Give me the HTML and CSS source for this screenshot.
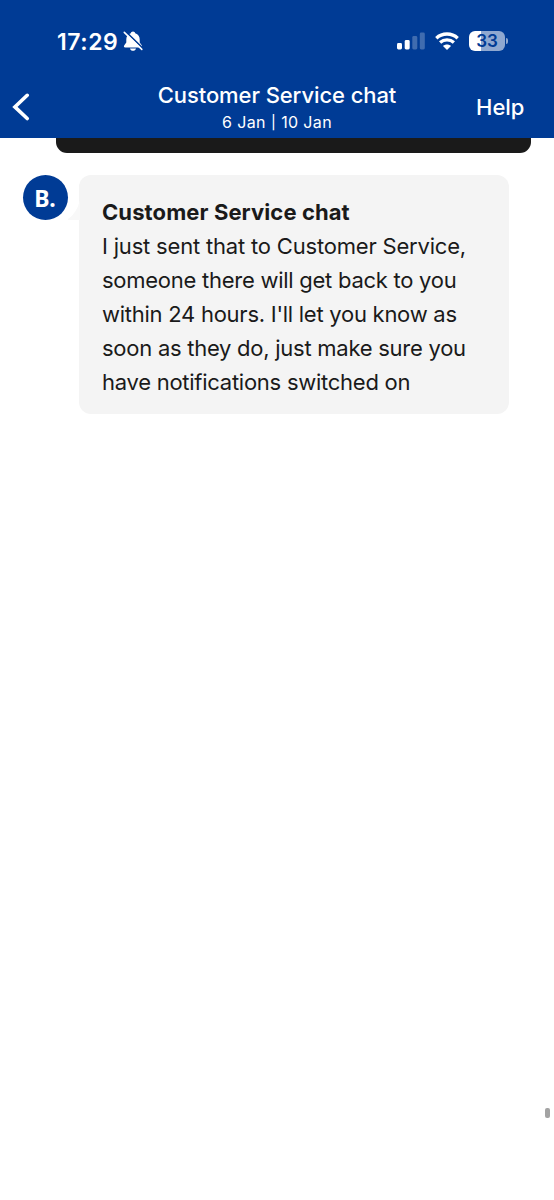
FILE: index.html
```html
<!DOCTYPE html>
<html lang="en">
<head>
<meta charset="utf-8">
<title>Customer Service chat</title>
<link rel="stylesheet" href="styles.css">
</head>
<body>
<header class="header">
  <div class="status">
    <span class="time">17:29</span>
    <svg class="bell" width="20" height="22" viewBox="0 0 20 22">
      <path d="M10 1.5C8.8 1.5 8 2.3 7.8 3.2C4.6 4.1 3.3 6.6 3.3 9.5V12.5L1.3 15.2C.5 16.5 1 17.5 2.3 17.5H17.7C19 17.5 19.5 16.5 18.7 15.2L16.7 12.5V9.5C16.7 6.6 15.4 4.1 12.2 3.2C12 2.3 11.2 1.5 10 1.5ZM7 18.5H13C12.7 20 11.4 20.8 10 20.8S7.3 20 7 18.5Z" fill="#fff"/>
      <path d="M2.2 1.2L20 18.4" stroke="#003b95" stroke-width="1.8"/>
      <path d="M1.3 2.4L18.8 19.4" stroke="#fff" stroke-width="1.6" stroke-linecap="round"/>
    </svg>
    <div class="indicators">
      <svg width="28" height="18" viewBox="0 0 28 18" fill="#fff">
        <rect x="0" y="11" width="5" height="6.5" rx="1.4"/>
        <rect x="7.7" y="8" width="5" height="9.5" rx="1.4"/>
        <rect x="15.3" y="4" width="5" height="13.5" rx="1.4" opacity=".25"/>
        <rect x="22.8" y="0.5" width="5" height="17" rx="1.4" opacity=".25"/>
      </svg>
      <svg class="wifi" width="24" height="18" viewBox="0 0 24 18" fill="none" stroke="#fff" stroke-width="3.3">
        <path d="M1.3 6.2C7.2 .6 16.8 .6 22.7 6.2"/>
        <path d="M5.1 10.5C9 7 15 7 18.9 10.5"/>
        <path d="M12 18L8 14C10.2 12 13.8 12 16 14Z" fill="#fff" stroke="none"/>
      </svg>
      <div class="battery"><span class="level">33</span><span class="cap"></span></div>
    </div>
  </div>
  <nav class="nav">
    <svg class="back" width="18" height="28" viewBox="0 0 18 28"><path d="M15.2 2.3L2.9 13.9L15.2 25.5" fill="none" stroke="#fff" stroke-width="3.6" stroke-linecap="round" stroke-linejoin="miter"/></svg>
    <div class="titles">
      <h1 class="title">Customer Service chat</h1>
      <p class="dates">6 Jan <span class="divider">|</span> 10 Jan</p>
    </div>
    <span class="help">Help</span>
  </nav>
</header>
<main class="chat">
  <div class="previous"></div>
  <article class="message">
    <div class="avatar">B.</div>
    <div class="bubble">
      <svg class="tail" width="12" height="20" viewBox="0 0 12 20"><path d="M12 0Q9 13 0 19V20H12Z" fill="#f8f8f8"/></svg>
      <h2 class="sender">Customer Service chat</h2>
      <p class="text">
        <span class="line l1">I just sent that to Customer Service,</span>
        <span class="line">someone there will get back to you</span>
        <span class="line">within 24 hours. I'll let you know as</span>
        <span class="line">soon as they do, just make sure you</span>
        <span class="line">have notifications switched on</span>
      </p>
    </div>
  </article>
  <div class="scrollbar"></div>
</main>
</body>
</html>
```
FILE: styles.css
```css
* { box-sizing: border-box; margin: 0; }
body { height: 1200px; background: #fff; font-family: Inter, "Liberation Sans", sans-serif; display: flex; flex-direction: column; overflow: hidden; }
.header { height: 138px; background: #003b95; color: #fff; flex: none; }
.status { height: 78px; padding: 4px 46px 0 57px; display: flex; align-items: center; }
.time { font-size: 23px; font-weight: 600; line-height: 30px; letter-spacing: .55px; width: 66px; padding-top: 1px; white-space: nowrap; }
.bell { display: block; }
.indicators { margin-left: auto; display: flex; align-items: center; }
.wifi { margin-left: 10px; }
.battery { position: relative; width: 36px; height: 20px; margin-left: 10px; margin-right: 3px; border-radius: 6px; background: linear-gradient(90deg, #fff 33%, #8fa8d0 33%); display: flex; justify-content: center; align-items: center; }
.level { color: #003b95; font-size: 17px; line-height: 20px; font-weight: 600; }
.cap { position: absolute; left: 37px; top: 7px; width: 2px; height: 6px; border-radius: 0 2px 2px 0; background: #8fa8d0; }
.nav { height: 60px; display: grid; grid-template-columns: 78px 1fr 78px; }
.back { margin: 15px 0 0 12px; }
.titles { text-align: center; }
.title { font-size: 22px; font-weight: 500; line-height: 30px; letter-spacing: -.08px; margin-top: 2px; }
.dates { font-size: 16px; line-height: 22px; letter-spacing: .35px; margin-top: 1px; }
.divider { display: inline-block; transform: scaleY(.85); }
.help { font-size: 22px; line-height: 30px; margin-top: 14px; font-weight: 500; }
.chat { flex: 1; display: flex; flex-direction: column; }
.previous { height: 15px; margin: 0 23px 0 56px; background: #1a1a1a; border-radius: 0 0 11px 11px; }
.message { display: flex; align-items: flex-start; margin: 22px 45px 0 22.5px; gap: 11.5px; }
.avatar { width: 45px; height: 45px; border-radius: 50%; background: #003b95; color: #fff; font-family: "Noto Sans", sans-serif; font-weight: 700; font-size: 23px; line-height: 46px; text-align: center; flex: none; }
.bubble { position: relative; flex: 1; height: 239px; border-radius: 12px; background: #f4f4f4; padding: 20px 20px 0 23px; color: #1a1a1a; }
.tail { position: absolute; left: -11px; top: 25px; }
.sender { font-size: 22px; line-height: 34px; font-weight: 700; letter-spacing: .1px; white-space: nowrap; }
.text { font-size: 22px; line-height: 34px; letter-spacing: -.26px; }
.line { display: block; white-space: nowrap; }
.l1 { letter-spacing: -.19px; }
.scrollbar { width: 5px; height: 10px; border-radius: 2px; background: #a3a3a3; align-self: flex-end; margin: 694px 4px 0 0; }
```
